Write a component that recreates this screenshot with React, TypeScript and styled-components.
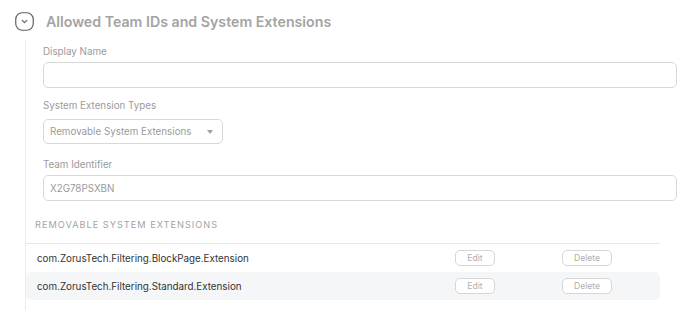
import { createGlobalStyle, styled } from 'styled-components';

const GlobalStyle = createGlobalStyle`
  html, body {
    margin: 0;
    padding: 0;
    background: #ffffff;
  }

  body {
    font-family: Inter, "Liberation Sans", sans-serif;
  }
`;

interface Extension {
  id: string;
}

const extensions: Extension[] = [
  { id: 'com.ZorusTech.Filtering.BlockPage.Extension' },
  { id: 'com.ZorusTech.Filtering.Standard.Extension' },
];

const ChevronIcon = () => (
  <svg width="19" height="19" viewBox="0 0 19 19" fill="none">
    <rect x="0.75" y="0.75" width="17.5" height="17.5" rx="6.5" stroke="#5f5f5f" strokeWidth="1.2" />
    <path d="M7.2 8.4L9.5 10.6L11.8 8.4" stroke="#5f5f5f" strokeWidth="1.2" strokeLinecap="round" strokeLinejoin="round" />
  </svg>
);

const App = () => {
  return (
    <>
      <GlobalStyle />
      <S.Page>
        <S.Header>
          <S.ToggleBtn>
            <ChevronIcon />
          </S.ToggleBtn>
          <S.Title>Allowed Team IDs and System Extensions</S.Title>
        </S.Header>

        <S.Body>
          <S.Form>
            <S.Field>
              <S.Label>Display Name</S.Label>
              <S.Input />
            </S.Field>

            <S.Field>
              <S.Label>System Extension Types</S.Label>
              <S.Select>
                <span>Removable System Extensions</span>
                <S.Caret />
              </S.Select>
            </S.Field>

            <S.Field>
              <S.Label>Team Identifier</S.Label>
              <S.Input defaultValue="X2G78PSXBN" />
            </S.Field>
          </S.Form>

          <S.SectionTitle>Removable System Extensions</S.SectionTitle>

          <S.Table>
            {extensions.map((ext, i) => (
              <S.Row key={ext.id} $striped={i % 2 === 1}>
                <S.RowName>{ext.id}</S.RowName>
                <S.RowAction>
                  <S.SmallBtn $width={40}>Edit</S.SmallBtn>
                </S.RowAction>
                <S.RowAction>
                  <S.SmallBtn $width={50}>Delete</S.SmallBtn>
                </S.RowAction>
              </S.Row>
            ))}
          </S.Table>
        </S.Body>
      </S.Page>
    </>
  );
};

const S = {
  Page: styled.div`
    width: 688px;
    height: 319px;
    padding-top: 12px;
    box-sizing: border-box;
    overflow: hidden;
  `,

  Header: styled.div`
    display: flex;
    align-items: center;
    gap: 12px;
    padding-left: 15px;
    height: 19px;
  `,

  ToggleBtn: styled.div`
    display: flex;
    width: 19px;
    height: 19px;
  `,

  Title: styled.h2`
    margin: 0;
    font-size: 14.2px;
    font-weight: 600;
    color: #a3a3a3;
  `,

  Body: styled.div`
    margin: 9px 0 0 25px;
    border-left: 1px solid #ebebeb;
    height: 270px;
  `,

  Form: styled.div`
    display: flex;
    flex-direction: column;
    gap: 12px;
    padding: 6px 11px 0 17px;
  `,

  Field: styled.div`
    display: flex;
    flex-direction: column;
    gap: 4px;
  `,

  Label: styled.label`
    font-size: 9.8px;
    line-height: 12px;
    color: #9a9a9a;
  `,

  Input: styled.input`
    height: 26px;
    box-sizing: border-box;
    padding: 0 6px;
    border: 1px solid #d9d9d9;
    border-radius: 5px;
    font-family: inherit;
    font-size: 9.8px;
    color: #9a9a9a;
    outline: none;
  `,

  Select: styled.div`
    display: flex;
    align-items: center;
    justify-content: space-between;
    width: 180px;
    height: 25px;
    margin: 3px 0;
    box-sizing: border-box;
    padding: 0 9px 0 6px;
    border: 1px solid #d9d9d9;
    border-radius: 5px;
    font-size: 9.8px;
    white-space: nowrap;
    color: #9a9a9a;
  `,

  Caret: styled.span`
    width: 0;
    height: 0;
    border-left: 3px solid transparent;
    border-right: 3px solid transparent;
    border-top: 4px solid #a0a0a0;
  `,

  SectionTitle: styled.div`
    margin: 18px 0 0 9px;
    font-size: 9.2px;
    line-height: 12px;
    letter-spacing: 1px;
    text-transform: uppercase;
    color: #a3a3a3;
  `,

  Table: styled.div`
    margin: 12px 28px 0 0;
    border-top: 1px solid #e8e8e8;
  `,

  Row: styled.div<{ $striped?: boolean }>`
    display: grid;
    grid-template-columns: 1fr 107px 98px;
    align-items: center;
    height: 28px;
    border-radius: 5px;
    background-color: ${({ $striped }) => ($striped ? '#f5f6f8' : 'transparent')};
  `,

  RowName: styled.div`
    padding-left: 11px;
    font-size: 9.8px;
    color: #333333;
  `,

  RowAction: styled.div`
    display: flex;
  `,

  SmallBtn: styled.button<{ $width: number }>`
    width: ${({ $width }) => $width}px;
    height: 16px;
    padding: 0;
    border: 1px solid #d6d6d6;
    border-radius: 5px;
    background: #ffffff;
    font-family: inherit;
    font-size: 8.6px;
    color: #b0b0b0;
  `,
};

export default App;
